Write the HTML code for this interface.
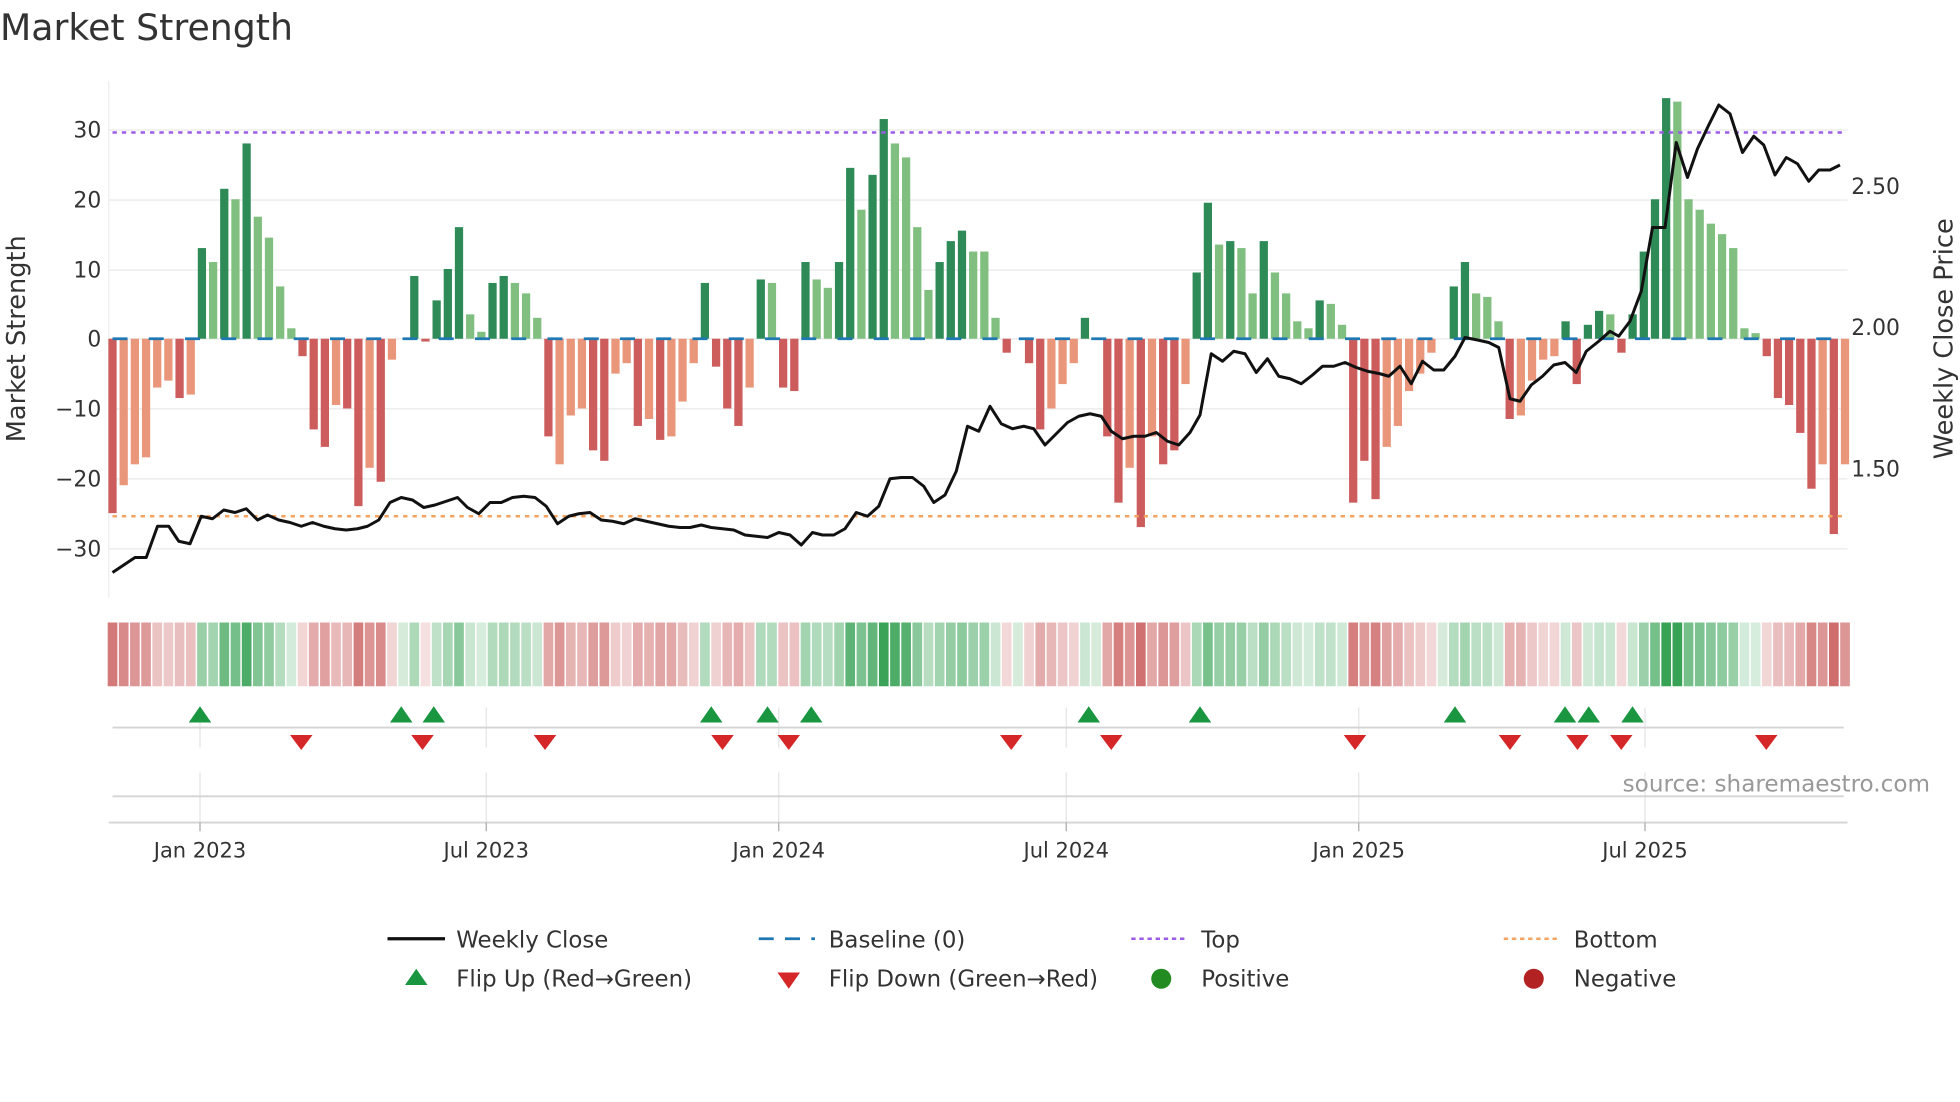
<!DOCTYPE html>
<html><head><meta charset="utf-8">
<style>
html,body{margin:0;padding:0;background:#fff;}
svg{display:block;}
text{font-family:"DejaVu Sans","Liberation Sans",sans-serif;fill:#333;}
</style></head>
<body>
<svg id="s" width="1960" height="1102" viewBox="0 0 1568 881.6" xmlns="http://www.w3.org/2000/svg">
<text x="0" y="32" font-size="29">Market Strength</text>
<g id="grid"></g>
<line x1="87" y1="65" x2="87" y2="478" stroke="#eee" stroke-width="1"/>
<g id="bars"></g>
<line x1="90" y1="271" x2="1476" y2="271" stroke="#1f77b4" stroke-width="2.2" stroke-dasharray="12 17"/>
<line x1="90" y1="106" x2="1476" y2="106" stroke="#9b5de5" stroke-width="2" stroke-dasharray="3.5 4"/>
<line x1="90" y1="413" x2="1476" y2="413" stroke="#f4a460" stroke-width="2" stroke-dasharray="3.5 4"/>
<polyline id="price" fill="none" stroke="#111" stroke-width="2.4" stroke-linejoin="round"/>
<g font-size="17.5" text-anchor="end">
<text x="81" y="110">30</text><text x="81" y="166">20</text><text x="81" y="222">10</text><text x="81" y="277">0</text>
<text x="81" y="333">−10</text><text x="81" y="389">−20</text><text x="81" y="445">−30</text>
</g>
<g font-size="17.5">
<text x="1481" y="155">2.50</text><text x="1481" y="268">2.00</text><text x="1481" y="381">1.50</text>
</g>
<text font-size="20.5" transform="translate(20,271) rotate(-90)" text-anchor="middle">Market Strength</text>
<text font-size="20.5" transform="translate(1562,271) rotate(-90)" text-anchor="middle">Weekly Close Price</text>
<g id="strip"></g>
<g stroke="#e4e4e4" stroke-width="1">
<line x1="160" y1="566" x2="160" y2="598"/><line x1="389" y1="566" x2="389" y2="598"/><line x1="623" y1="566" x2="623" y2="598"/><line x1="853" y1="566" x2="853" y2="598"/><line x1="1087" y1="566" x2="1087" y2="598"/><line x1="1316" y1="566" x2="1316" y2="598"/>
<line x1="160" y1="618" x2="160" y2="658"/><line x1="389" y1="618" x2="389" y2="658"/><line x1="623" y1="618" x2="623" y2="658"/><line x1="853" y1="618" x2="853" y2="658"/><line x1="1087" y1="618" x2="1087" y2="658"/><line x1="1316" y1="618" x2="1316" y2="658"/>
</g>
<line x1="90" y1="582" x2="1475" y2="582" stroke="#d4d4d4" stroke-width="1.5"/>
<line x1="90" y1="637" x2="1475" y2="637" stroke="#d4d4d4" stroke-width="1.5"/>
<line x1="87" y1="658" x2="1478" y2="658" stroke="#d4d4d4" stroke-width="1.5"/>
<g stroke="#aaa" stroke-width="1"><line x1="160" y1="658" x2="160" y2="665"/><line x1="389" y1="658" x2="389" y2="665"/><line x1="623" y1="658" x2="623" y2="665"/><line x1="853" y1="658" x2="853" y2="665"/><line x1="1087" y1="658" x2="1087" y2="665"/><line x1="1316" y1="658" x2="1316" y2="665"/></g>
<g id="marks"></g>
<text x="1544" y="633" font-size="18.5" text-anchor="end" style="fill:#999">source: sharemaestro.com</text>
<g font-size="16.8" text-anchor="middle">
<text x="160" y="686">Jan 2023</text><text x="389" y="686">Jul 2023</text><text x="623" y="686">Jan 2024</text><text x="853" y="686">Jul 2024</text><text x="1087" y="686">Jan 2025</text><text x="1316" y="686">Jul 2025</text>
</g>
<g font-size="18.3">
<line x1="310" y1="751" x2="356" y2="751" stroke="#111" stroke-width="2.6"/>
<text x="365" y="758">Weekly Close</text>
<line x1="607" y1="751" x2="652" y2="751" stroke="#1f77b4" stroke-width="2.2" stroke-dasharray="12 9"/>
<text x="663" y="758">Baseline (0)</text>
<line x1="905" y1="751" x2="950" y2="751" stroke="#9b5de5" stroke-width="2" stroke-dasharray="3.5 3"/>
<text x="961" y="758">Top</text>
<line x1="1203" y1="751" x2="1248" y2="751" stroke="#f4a460" stroke-width="2" stroke-dasharray="3.5 3"/>
<text x="1259" y="758">Bottom</text>
<polygon points="333,775 324,788 342,788" fill="#1a9641"/>
<text x="365" y="789">Flip Up (Red→Green)</text>
<polygon points="622,778 640,778 631,791" fill="#d62728"/>
<text x="663" y="789">Flip Down (Green→Red)</text>
<circle cx="929" cy="783" r="8" fill="#228b22"/>
<text x="961" y="789">Positive</text>
<circle cx="1227" cy="783" r="8" fill="#b22222"/>
<text x="1259" y="789">Negative</text>
</g>
</svg>
<script>
var NS="http://www.w3.org/2000/svg";
function el(p,t,a){var e=document.createElementNS(NS,t);for(var k in a)e.setAttribute(k,a[k]);p.appendChild(e);return e;}
var g=document.getElementById('grid');
[104,160,216,271,327,383,439].forEach(function(y){el(g,'line',{x1:87,x2:1478,y1:y,y2:y,stroke:'#eeeeee','stroke-width':1.3});});
var d=[[-25,1],[-21,0],[-18,0],[-17,0],[-7,0],[-6,0],[-8.5,1],[-8,0],[13,1],[11,0],[21.5,1],[20,0],[28,1],[17.5,0],[14.5,0],[7.5,0],[1.5,0],[-2.5,1],[-13,1],[-15.5,1],[-9.5,0],[-10,1],[-24,1],[-18.5,0],[-20.5,1],[-3,0],[0,0],[9,1],[-0.4,1],[5.5,1],[10,1],[16,1],[3.5,0],[1,0],[8,1],[9,1],[8,0],[6.5,0],[3,0],[-14,1],[-18,0],[-11,0],[-10,0],[-16,1],[-17.5,1],[-5,0],[-3.5,0],[-12.5,1],[-11.5,0],[-14.5,1],[-14,0],[-9,0],[-3.5,0],[8,1],[-4,1],[-10,1],[-12.5,1],[-7,0],[8.5,1],[8,0],[-7,1],[-7.5,1],[11,1],[8.5,0],[7.3,0],[11,1],[24.5,1],[18.5,0],[23.5,1],[31.5,1],[28,0],[26,0],[16,0],[7,0],[11,1],[14,1],[15.5,1],[12.5,0],[12.5,0],[3,0],[-2,1],[0,0],[-3.5,1],[-13,1],[-10,0],[-6.5,0],[-3.5,0],[3,1],[0,0],[-14,1],[-23.5,1],[-18.5,0],[-27,1],[-14,0],[-18,1],[-16,1],[-6.5,0],[9.5,1],[19.5,1],[13.5,0],[14,1],[13,0],[6.5,0],[14,1],[9.5,0],[6.5,0],[2.5,0],[1.5,0],[5.5,1],[5,0],[2,0],[-23.5,1],[-17.5,1],[-23,1],[-15.5,0],[-12.5,0],[-7.5,0],[-5,0],[-2,0],[0,0],[7.5,1],[11,1],[6.5,0],[6,0],[2.5,0],[-11.5,1],[-11,0],[-6,0],[-3,0],[-2.5,0],[2.5,1],[-6.5,1],[2,1],[4,1],[3.5,0],[-2,1],[3.5,1],[12.5,1],[20,1],[34.5,1],[34,0],[20,0],[18.5,0],[16.5,0],[15,0],[13,0],[1.5,0],[0.8,0],[-2.5,1],[-8.5,1],[-9.5,1],[-13.5,1],[-21.5,1],[-18,0],[-28,1],[-18,0]];
var b=document.getElementById('bars'),st=document.getElementById('strip');
var step=(1476-90)/155;
d.forEach(function(p,i){
  var v=p[0],x=90+step*i;
  if(v!==0){var y=271-v*5.58;var col=v>0?(p[1]?'#2e8b57':'#80bf80'):(p[1]?'#cd5c5c':'#e9967a');
    el(b,'rect',{x:x-3.3,width:6.6,y:Math.min(y,271),height:Math.abs(y-271),fill:col});}
  var t=Math.min(Math.abs(v)/32,1);var a=0.18+0.8*t;
  var c=v>=0?'rgba(52,160,82,'+a+')':'rgba(200,88,88,'+a+')';
  if(v===0)c='rgba(120,190,130,0.3)';
  el(st,'rect',{x:x-4.45+0.6,width:step-1.2,y:498,height:51,fill:c});
});
var pts=[[90,458],[99,452],[108,446],[117,446],[126,421],[135,421],[143,433],[152,435],[161,413],[170,415],[179,408],[188,410],[197,407],[206,416],[214,412],[223,416],[232,418],[241,421],[250,418],[259,421],[268,423],[277,424],[286,423],[294,421],[303,416],[312,402],[321,398],[330,400],[339,406],[348,404],[357,401],[366,398],[374,406],[383,411],[392,402],[401,402],[410,398],[419,397],[428,398],[437,405],[446,419],[455,413],[463,411],[472,410],[481,416],[490,417],[499,419],[508,415],[517,417],[526,419],[535,421],[544,422],[552,422],[561,420],[569,422],[578,423],[587,424],[596,428],[605,429],[614,430],[623,426],[632,428],[641,436],[650,426],[658,428],[667,428],[676,423],[685,410],[694,413],[703,405],[712,383],[721,382],[730,382],[739,389],[747,402],[756,396],[765,377],[774,341],[783,345],[792,325],[801,339],[810,343],[819,341],[827,343],[836,356],[845,347],[854,338],[863,333],[872,331],[881,333],[889,345],[898,351],[907,349],[916,349],[925,346],[934,353],[943,356],[952,346],[960,332],[969,283],[978,289],[987,281],[996,283],[1005,298],[1014,287],[1023,301],[1032,303],[1041,307],[1050,300],[1058,293],[1067,293],[1076,290],[1085,294],[1094,297],[1104,299],[1111,301],[1120,293],[1129,307],[1138,289],[1147,296],[1155,296],[1164,285],[1172,270],[1182,272],[1191,274],[1199,278],[1208,319],[1216,321],[1225,308],[1234,301],[1243,292],[1252,290],[1261,298],[1269,281],[1279,273],[1288,265],[1295,269],[1304,257],[1313,233],[1322,182],[1332,182],[1341,114],[1350,142],[1358,119],[1367,100],[1375,84],[1384,91],[1394,122],[1403,109],[1411,116],[1420,140],[1429,126],[1438,131],[1447,145],[1455,136],[1464,136],[1472,132]];
document.getElementById('price').setAttribute('points',pts.map(function(p){return p.join(',')}).join(' '));
var m=document.getElementById('marks');
[160,321,347,569,614,649,871,960,1164,1252,1271,1306].forEach(function(x){el(m,'polygon',{points:(x)+',565 '+(x-9)+',578 '+(x+9)+',578',fill:'#1a9641'});});
[241,338,436,578,631,809,889,1084,1208,1262,1297,1413].forEach(function(x){el(m,'polygon',{points:(x-9)+',588 '+(x+9)+',588 '+x+',600',fill:'#d62728'});});
</script>
</body></html>
